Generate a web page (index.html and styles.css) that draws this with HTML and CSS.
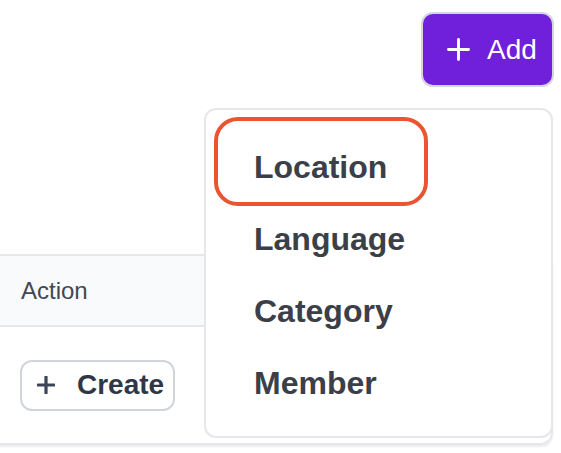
FILE: index.html
```html
<!DOCTYPE html>
<html>
<head>
<meta charset="utf-8">
<link rel="stylesheet" href="styles.css">
</head>
<body>
<div class="page">
  <div class="toolbar">
    <button class="add-btn">
      <svg class="add-icon" viewBox="0 0 24 24" width="23" height="23"><path d="M12 1.5v21M1.5 12h21" stroke="#fff" stroke-width="3" stroke-linecap="round" fill="none"/></svg>
      <span>Add</span>
    </button>
  </div>
  <div class="card">
    <div class="head-row"><span class="th">Action</span></div>
    <div class="body-row">
      <button class="create-btn">
        <svg viewBox="0 0 18 18" width="18" height="18"><path d="M9 1v16M1 9h16" stroke="#3b4557" stroke-width="3.2" stroke-linecap="round" fill="none"/></svg>
        <span>Create</span>
      </button>
    </div>
  </div>
  <div class="menu">
    <div class="highlight"></div>
    <div class="item">Location</div>
    <div class="item">Language</div>
    <div class="item">Category</div>
    <div class="item">Member</div>
  </div>
</div>
</body>
</html>
```

FILE: styles.css
```css
html, body {
  margin: 0;
  padding: 0;
  background: #fff;
  font-family: "Liberation Sans", Arial, Helvetica, sans-serif;
  overflow: hidden;
}

.page {
  position: relative;
  width: 561px;
  height: 453px;
}

.toolbar {
  display: flex;
  justify-content: flex-end;
  padding: 12px 7px 0 0;
}

.add-btn {
  display: flex;
  align-items: center;
  gap: 17px;
  box-sizing: border-box;
  width: 133px;
  height: 75px;
  padding: 0 0 0 24px;
  background: #701fdb;
  color: #fff;
  border: 2px solid #d4d6dc;
  border-radius: 12px;
  font-family: inherit;
  font-size: 28px;
  font-weight: 500;
  cursor: pointer;
}

.add-btn span {
  line-height: 1;
}

.card {
  margin: 167px 8px 0 -20px;
  border: 2px solid #e5e7eb;
  border-radius: 12px;
  box-shadow: 0 2px 2px rgba(0, 0, 0, 0.08);
  overflow: hidden;
}

.head-row {
  display: flex;
  align-items: center;
  height: 69px;
  padding-left: 39px;
  background: #f9fafb;
  border-bottom: 2px solid #e5e7eb;
}

.th {
  font-size: 24px;
  color: #414855;
}

.body-row {
  display: flex;
  align-items: center;
  height: 116px;
  padding-left: 38px;
}

.create-btn {
  display: flex;
  align-items: center;
  gap: 22px;
  box-sizing: border-box;
  width: 155px;
  height: 51px;
  padding: 0 0 0 15px;
  background: #fff;
  border: 2px solid #d1d5db;
  border-radius: 12px;
  font-family: inherit;
  font-size: 28px;
  font-weight: 700;
  color: #2f3747;
}

.menu {
  position: absolute;
  left: 204px;
  top: 108px;
  box-sizing: border-box;
  width: 349px;
  height: 330px;
  padding: 21px 0 0 48px;
  background: #fff;
  border: 2px solid #e5e7eb;
  border-radius: 12px;
  display: flex;
  flex-direction: column;
}

.item {
  height: 72px;
  display: flex;
  align-items: center;
  font-size: 32px;
  font-weight: 700;
  color: #3b4048;
}

.highlight {
  position: absolute;
  left: 8px;
  top: 7px;
  width: 206px;
  height: 81px;
  border: 4px solid #ea5430;
  border-radius: 24px;
}
```
